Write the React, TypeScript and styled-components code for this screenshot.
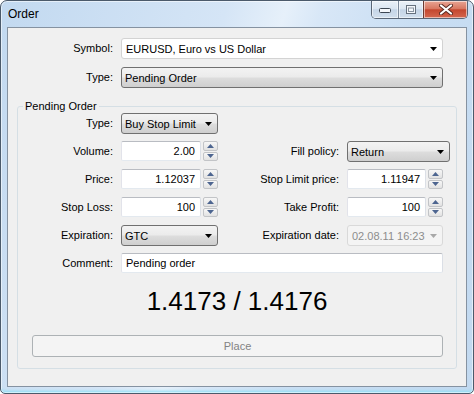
import React from 'react';
import styled, { createGlobalStyle } from 'styled-components';

const GlobalStyle = createGlobalStyle`
    html, body {
        margin: 0;
        padding: 0;
        background: #ffffff;
    }
    body {
        font-family: "Liberation Sans", Arial, sans-serif;
        font-size: 11px;
        color: #000;
    }
`;

const Window = styled.div`
    box-sizing: border-box;
    width: 474px;
    height: 394px;
    display: flex;
    flex-direction: column;
    border: 1px solid #4b5a6b;
    border-radius: 7px 7px 5px 5px;
    overflow: hidden;
    background: linear-gradient(
        108deg,
        #c2d9f0 0%,
        #d5e5f6 38%,
        #e6f0fa 48%,
        #d8e7f7 54%,
        #c9def3 70%,
        #c2d9f0 100%
    );
    box-shadow: inset 0 0 0 1px rgba(255, 255, 255, 0.55), inset 0 -4px 3px -2px #8fdff6;
`;

const TitleBar = styled.div`
    height: 26px;
    display: flex;
    align-items: flex-start;
    flex-shrink: 0;
`;

const Title = styled.div`
    font-family: "Liberation Sans", Arial, sans-serif;
    font-size: 12px;
    line-height: 27px;
    padding-left: 7px;
    color: #000;
`;

const Captions = styled.div`
    margin-left: auto;
    margin-right: 5px;
    display: flex;
    border: 1px solid #5a6676;
    border-top: none;
    border-radius: 0 0 5px 5px;
    overflow: hidden;
`;

const CaptionButton = styled.div<{ $w: number; $close?: boolean }>`
    width: ${(p) => p.$w}px;
    height: 17px;
    display: flex;
    align-items: center;
    justify-content: center;
    box-shadow: inset 0 0 0 1px rgba(255, 255, 255, 0.55);
    border-left: ${(p) => (p.$close ? '1px solid #6b3a32' : '1px solid #7c8a9b')};
    background: ${(p) =>
        p.$close
            ? 'linear-gradient(#e8a594 0%, #d87862 45%, #c4472f 52%, #d4674f 100%)'
            : 'linear-gradient(#eaf1f8 0%, #dbe6f2 45%, #c5d5e7 52%, #d2dfed 100%)'};
    &:first-child {
        border-left: none;
    }
`;

const Client = styled.div`
    flex: 1;
    margin: 0 6px 6px 6px;
    border: 1px solid #8592a1;
    background: #f0f0f0;
    padding: 10px 9px 0 9px;
    display: flex;
    flex-direction: column;
`;

const TopGrid = styled.div`
    display: grid;
    grid-template-columns: 96px 1fr;
    column-gap: 8px;
    row-gap: 8px;
    padding-right: 14px;
`;

const Label = styled.div`
    text-align: right;
    line-height: 21px;
    white-space: nowrap;
`;

const Combo = styled.div<{ $kind?: 'white' | 'button' | 'disabled'; $w?: number }>`
    box-sizing: border-box;
    height: 21px;
    ${(p) => (p.$w ? `width: ${p.$w}px;` : '')}
    display: flex;
    align-items: center;
    padding: 0 5px 0 4px;
    border-radius: 3px;
    white-space: nowrap;
    border: 1px solid
        ${(p) => (p.$kind === 'button' ? '#707070' : p.$kind === 'disabled' ? '#d9d9d9' : '#d3d3d3')};
    background: ${(p) =>
        p.$kind === 'button'
            ? 'linear-gradient(#f3f3f3 0%, #ebebeb 48%, #dddddd 52%, #cfcfcf 100%)'
            : p.$kind === 'disabled'
              ? '#f4f4f4'
              : '#ffffff'};
    color: ${(p) => (p.$kind === 'disabled' ? '#8d8d8d' : '#000')};
    padding-left: ${(p) => (p.$kind === 'button' ? 3 : 4)}px;
`;

const ComboText = styled.span`
    flex: 1;
`;

const Group = styled.fieldset`
    margin: 12px 0 0 0;
    border: 1px solid #d5dfe5;
    border-radius: 3px;
    padding: 0 0 11px 0;
    min-width: 0;
`;

const Legend = styled.legend`
    margin-left: 5px;
    padding: 0 2px;
    font-size: 11px;
    line-height: 13px;
`;

const FormGrid = styled.div`
    display: grid;
    grid-template-columns: 95px 97px 1fr 96px;
    grid-auto-rows: 21px;
    column-gap: 8px;
    row-gap: 7px;
    padding-right: 13px;
    align-items: start;
`;

const SpinField = styled.div`
    display: flex;
    gap: 2px;
    height: 20px;
`;

const TextBox = styled.div<{ $align?: 'left' | 'right' }>`
    box-sizing: border-box;
    flex: 1;
    height: 20px;
    line-height: 18px;
    background: #fff;
    border: 1px solid;
    border-color: #b9bcc2 #dbdfe6 #e3e9ef #e2e3ea;
    border-radius: 2px;
    padding: 0 5px 0 4px;
    text-align: ${(p) => p.$align || 'left'};
    white-space: nowrap;
`;

const Spinner = styled.div`
    width: 15px;
    display: flex;
    flex-direction: column;
    gap: 1px;
`;

const SpinButton = styled.div`
    box-sizing: border-box;
    flex: 1;
    border: 1px solid #c2c4c7;
    border-radius: 2px;
    background: linear-gradient(#f7f7f7, #e2e2e2);
    display: flex;
    align-items: center;
    justify-content: center;
`;

const Quote = styled.div`
    margin-top: 11px;
    text-align: center;
    font-size: 26px;
    line-height: 32px;
    font-family: "Liberation Sans", Arial, sans-serif;
`;

const PlaceButton = styled.div`
    box-sizing: border-box;
    height: 22px;
    margin: 18px 13px 0 14px;
    border: 1px solid #adb2b5;
    border-radius: 3px;
    background: #f4f4f4;
    color: #838383;
    text-align: center;
    line-height: 20px;
`;

const Arrow = ({ color = '#000' }: { color?: string }) => (
    <svg width="7" height="4" viewBox="0 0 7 4">
        <path d="M0 0h7L3.5 4z" fill={color} />
    </svg>
);

const SpinArrow = ({ up }: { up?: boolean }) => (
    <svg width="7" height="4" viewBox="0 0 7 4">
        <path d={up ? 'M0 4h7L3.5 0z' : 'M0 0h7L3.5 4z'} fill="#4d6590" />
    </svg>
);

const Spin = ({ value }: { value: string }) => (
    <SpinField>
        <TextBox $align="right">{value}</TextBox>
        <Spinner>
            <SpinButton>
                <SpinArrow up />
            </SpinButton>
            <SpinButton>
                <SpinArrow />
            </SpinButton>
        </Spinner>
    </SpinField>
);

const Select = ({
    value,
    kind = 'button',
    w,
}: {
    value: string;
    kind?: 'white' | 'button' | 'disabled';
    w?: number;
}) => (
    <Combo $kind={kind} $w={w}>
        <ComboText>{value}</ComboText>
        <Arrow color={kind === 'disabled' ? '#a8a8a8' : '#000'} />
    </Combo>
);

export default function App() {
    return (
        <>
            <GlobalStyle />
            <Window>
                <TitleBar>
                    <Title>Order</Title>
                    <Captions>
                        <CaptionButton $w={26}>
                            <svg width="12" height="6" viewBox="0 0 12 6">
                                <rect x="0.5" y="1.5" width="11" height="4" rx="1" fill="#f4f7fb" stroke="#3c4652" />
                            </svg>
                        </CaptionButton>
                        <CaptionButton $w={24}>
                            <svg width="10" height="9" viewBox="0 0 10 9">
                                <rect x="0.5" y="0.5" width="9" height="8" fill="#f4f7fb" stroke="#66717e" />
                                <rect x="2.5" y="3" width="5" height="3.5" fill="none" stroke="#8893a0" />
                            </svg>
                        </CaptionButton>
                        <CaptionButton $w={43} $close>
                            <svg width="14" height="11" viewBox="0 0 14 11">
                                <path d="M2 1.5l10 8M12 1.5l-10 8" stroke="#5a2a22" strokeWidth="4" strokeLinecap="round" />
                                <path d="M2 1.5l10 8M12 1.5l-10 8" stroke="#ffffff" strokeWidth="2.2" strokeLinecap="round" />
                            </svg>
                        </CaptionButton>
                    </Captions>
                </TitleBar>
                <Client>
                    <TopGrid>
                        <Label>Symbol:</Label>
                        <Select kind="white" value="EURUSD, Euro vs US Dollar" />
                        <Label>Type:</Label>
                        <Select value="Pending Order" />
                    </TopGrid>
                    <Group>
                        <Legend>Pending Order</Legend>
                        <FormGrid>
                            <Label>Type:</Label>
                            <Select value="Buy Stop Limit" />
                            <div />
                            <div />

                            <Label>Volume:</Label>
                            <Spin value="2.00" />
                            <Label>Fill policy:</Label>
                            <Select value="Return" w={103} />

                            <Label>Price:</Label>
                            <Spin value="1.12037" />
                            <Label>Stop Limit price:</Label>
                            <Spin value="1.11947" />

                            <Label>Stop Loss:</Label>
                            <Spin value="100" />
                            <Label>Take Profit:</Label>
                            <Spin value="100" />

                            <Label>Expiration:</Label>
                            <Select value="GTC" />
                            <Label>Expiration date:</Label>
                            <Select kind="disabled" value="02.08.11 16:23" />

                            <Label>Comment:</Label>
                            <div style={{ gridColumn: '2 / 5', display: 'flex' }}>
                                <TextBox>Pending order</TextBox>
                            </div>
                        </FormGrid>
                        <Quote>1.4173 / 1.4176</Quote>
                        <PlaceButton>Place</PlaceButton>
                    </Group>
                </Client>
            </Window>
        </>
    );
}
